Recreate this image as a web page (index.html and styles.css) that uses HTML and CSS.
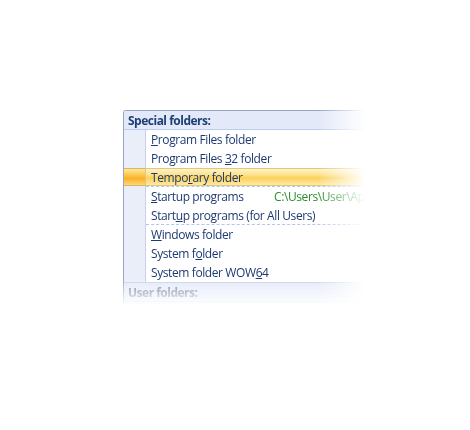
FILE: index.html
```html
<!DOCTYPE html>
<html>
<head>
<meta charset="utf-8">
<link rel="stylesheet" href="styles.css">
</head>
<body>
<div class="fade-x">
  <div class="fade-y">
    <div class="menu">
      <div class="group-header">Special folders:</div>
      <div class="group">
        <div class="gutter"></div>
        <div class="items">
          <div class="item"><span class="label"><u>P</u>rogram Files folder</span></div>
          <div class="item"><span class="label">Program Files <u>3</u>2 folder</span></div>
          <div class="item active sep"><span class="label">Tempo<u>r</u>ary folder</span></div>
          <div class="item"><span class="label"><u>S</u>tartup programs</span><span class="path">C:\Users\User\AppData</span></div>
          <div class="item sep"><span class="label">Start<u>u</u>p programs (for All Users)</span></div>
          <div class="item"><span class="label"><u>W</u>indows folder</span></div>
          <div class="item"><span class="label">System f<u>o</u>lder</span></div>
          <div class="item"><span class="label">System folder WOW<u>6</u>4</span></div>
        </div>
      </div>
      <div class="group-header next">User folders:</div>
    </div>
  </div>
</div>
</body>
</html>
```
FILE: styles.css
```css
html, body {
  margin: 0;
  padding: 0;
  background: #fff;
}
body {
  padding: 110px 0 0 123px;
  font-family: "Open Sans", "Noto Sans", sans-serif;
  font-size: 12px;
  letter-spacing: -0.4px;
}
.fade-x {
  width: 250px;
  -webkit-mask-image: linear-gradient(to right, #000 195px, transparent 242px);
  mask-image: linear-gradient(to right, #000 195px, transparent 242px);
}
.fade-y {
  -webkit-mask-image: linear-gradient(to bottom, #000 168px, transparent 196px);
  mask-image: linear-gradient(to bottom, #000 168px, transparent 196px);
}
.menu {
  border: 1px solid #98a6bf;
  border-right: none;
  border-top-left-radius: 3px;
  background: #e9eef9;
  height: 200px;
}
.group-header {
  height: 18px;
  line-height: 20px;
  padding-left: 4px;
  font-weight: bold;
  letter-spacing: -0.5px;
  color: #1e3f74;
  background: #e3e9f9;
  border-bottom: 1px solid #bccbef;
}
.group-header.next {
  border-top: 1px solid #c8d3ea;
  color: #6f7f9c;
}
.group {
  display: flex;
}
.gutter {
  width: 21px;
  flex: none;
  border-right: 1px solid #c7d2e8;
}
.items {
  flex: 1;
  background: #fff;
  border-top-left-radius: 3px;
}
.item {
  height: 19px;
  line-height: 20px;
  padding-left: 5px;
  color: #1f3a72;
  display: flex;
  white-space: nowrap;
  box-sizing: border-box;
  position: relative;
  z-index: 0;
}
.item u {
  text-decoration-thickness: 1px;
  text-underline-offset: 1px;
}
.item.sep {
  border-bottom: 1px dashed #b4c6ee;
}
.label {
  width: 123px;
  flex: none;
}
.path {
  color: #2a8f2a;
}
.item.active::after {
  content: "";
  position: absolute;
  left: 0;
  right: 0;
  top: 0;
  height: 18px;
  z-index: -1;
  box-sizing: border-box;
  background: linear-gradient(to bottom, #fff3c8 0%, #fde28e 35%, #fcd25a 55%, #fde9a6 100%);
  border-top: 1px solid #e0c77a;
  border-bottom: 1px solid #e0c77a;
}
.item.active::before {
  content: "";
  position: absolute;
  left: -22px;
  top: 0;
  height: 18px;
  width: 22px;
  box-sizing: border-box;
  background: linear-gradient(to bottom, #fde9a0 0%, #fbc548 40%, #f8b22a 60%, #fcd77a 100%);
  border-top: 1px solid #dfb45c;
  border-bottom: 1px solid #dfb45c;
  border-right: 1px solid #e6c57c;
}
```
